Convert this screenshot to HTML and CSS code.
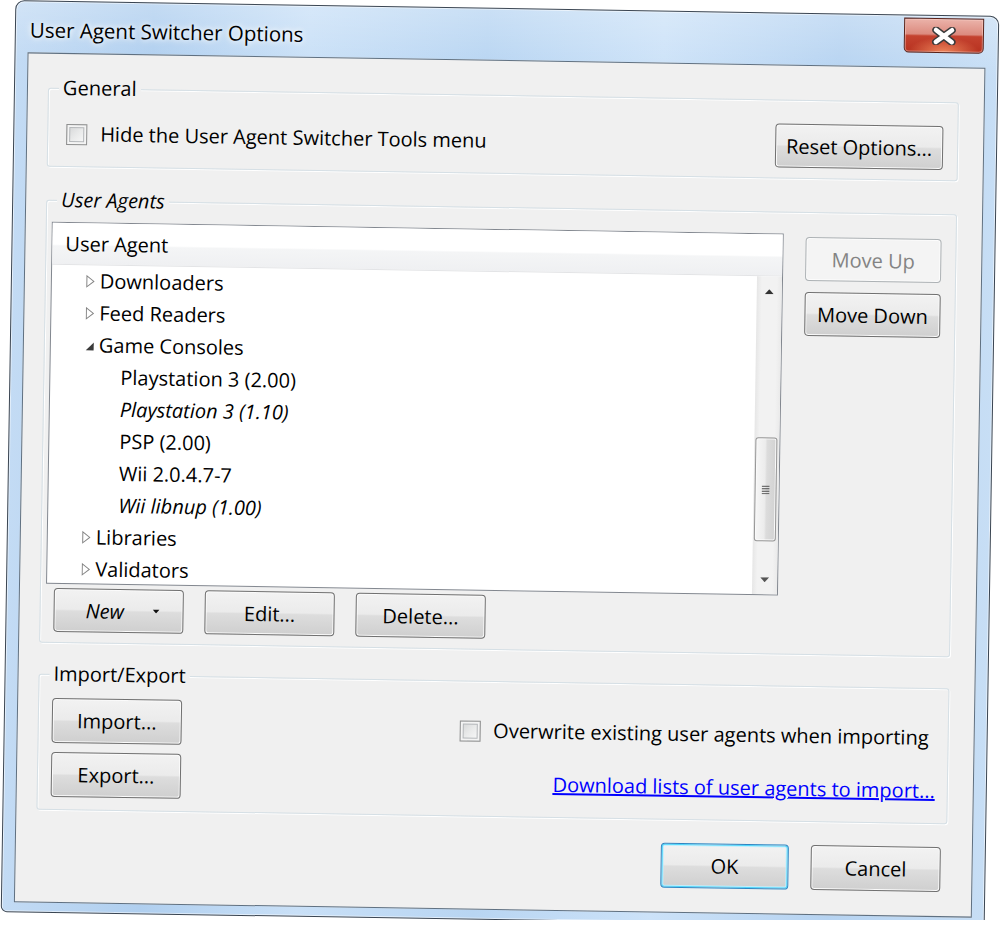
FILE: index.html
```html
<!DOCTYPE html>
<html>
<head>
<meta charset="utf-8">
<title>User Agent Switcher Options</title>
<link rel="stylesheet" href="styles.css">
</head>
<body>
<div class="window">
  <div class="titlebar">
    <span class="title">User Agent Switcher Options</span>
    <div class="close">
      <svg width="28" height="18" viewBox="0 0 28 18">
        <path d="M6 3 L22 15 M22 3 L6 15" stroke="#3b3b3b" stroke-width="7.5" stroke-linecap="round"/>
        <path d="M6 3 L22 15 M22 3 L6 15" stroke="#ffffff" stroke-width="4.5" stroke-linecap="round"/>
      </svg>
    </div>
  </div>
  <div class="client">
    <fieldset class="group general">
      <legend>General</legend>
      <div class="general-body">
        <label class="check"><span class="box"></span><span>Hide the User Agent Switcher Tools menu</span></label>
        <button class="btn reset">Reset Options...</button>
      </div>
    </fieldset>

    <fieldset class="group agents">
      <legend class="italic">User Agents</legend>
      <div class="agents-body">
        <div class="agents-main">
          <div class="tree">
            <div class="tree-head">User Agent</div>
            <div class="tree-body">
              <div class="rows">
                <div class="row l0"><svg class="twisty" viewBox="0 0 9 14"><polygon points="1,1.5 8,7 1,12.5" fill="#fff" stroke="#858585" stroke-width="1"/></svg>Downloaders</div>
                <div class="row l0"><svg class="twisty" viewBox="0 0 9 14"><polygon points="1,1.5 8,7 1,12.5" fill="#fff" stroke="#858585" stroke-width="1"/></svg>Feed Readers</div>
                <div class="row l0"><svg class="twisty" viewBox="0 0 9 14"><polygon points="9,4 9,12 1,12" fill="#3a3a3a"/></svg>Game Consoles</div>
                <div class="row l1">Playstation 3 (2.00)</div>
                <div class="row l1 italic">Playstation 3 (1.10)</div>
                <div class="row l1">PSP (2.00)</div>
                <div class="row l1">Wii 2.0.4.7-7</div>
                <div class="row l1 italic">Wii libnup (1.00)</div>
                <div class="row l0"><svg class="twisty" viewBox="0 0 9 14"><polygon points="1,1.5 8,7 1,12.5" fill="#fff" stroke="#858585" stroke-width="1"/></svg>Libraries</div>
                <div class="row l0"><svg class="twisty" viewBox="0 0 9 14"><polygon points="1,1.5 8,7 1,12.5" fill="#fff" stroke="#858585" stroke-width="1"/></svg>Validators</div>
              </div>
              <div class="scrollbar">
                <div class="sb-btn"><svg width="9" height="5" viewBox="0 0 9 5"><polygon points="4.5,0 9,5 0,5" fill="#333"/></svg></div>
                <div class="sb-track">
                  <div class="thumb">
                    <svg width="8" height="9" viewBox="0 0 8 9"><path d="M0 1h8M0 3.5h8M0 6h8M0 8.5h8" stroke="#4a4a4a" stroke-width="1"/></svg>
                  </div>
                </div>
                <div class="sb-btn"><svg width="9" height="5" viewBox="0 0 9 5"><polygon points="0,0 9,0 4.5,5" fill="#555"/></svg></div>
              </div>
            </div>
          </div>
          <div class="tree-buttons">
            <button class="btn new"><span class="italic">New</span><svg width="7" height="4" viewBox="0 0 7 4"><polygon points="0,0 7,0 3.5,4" fill="#111"/></svg></button>
            <button class="btn">Edit...</button>
            <button class="btn">Delete...</button>
          </div>
        </div>
        <div class="side-buttons">
          <button class="btn disabled">Move Up</button>
          <button class="btn">Move Down</button>
        </div>
      </div>
    </fieldset>

    <fieldset class="group io">
      <legend>Import/Export</legend>
      <div class="io-body">
        <div class="io-buttons">
          <button class="btn io-btn">Import...</button>
          <button class="btn io-btn">Export...</button>
        </div>
        <div class="io-right">
          <label class="check overwrite"><span class="box"></span><span>Overwrite existing user agents when importing</span></label>
          <a class="link" href="#">Download lists of user agents to import...</a>
        </div>
      </div>
    </fieldset>

    <div class="footer">
      <button class="btn ok">OK</button>
      <button class="btn cancel">Cancel</button>
    </div>
  </div>
</div>
</body>
</html>
```

FILE: styles.css
```css
* { box-sizing: border-box; }
html, body { margin: 0; background: #ffffff; }
body {
  font-family: "Open Sans", "Noto Sans", sans-serif;
  font-size: 20px;
  color: #000;
}
.italic { font-style: italic; }

.window {
  width: 984px;
  height: 912px;
  margin: 8px 0 0 8px;
  border: 1px solid #3a4552;
  border-radius: 9px 9px 6px 6px;
  background:
    linear-gradient(180deg, rgba(255,255,255,0.25), rgba(255,255,255,0) 60px),
    linear-gradient(90deg, #c3dbf4 0%, #b0cfef 14%, #c9e0f7 30%, #b8d5f2 48%, #cce2f8 66%, #b6d3f1 84%, #c7def5 100%);
  box-shadow: inset 0 0 0 1px rgba(255,255,255,0.55);
  padding: 0 12px 9px;
  display: flex;
  flex-direction: column;
  transform: rotate(0.92deg);
}

.titlebar {
  height: 51px;
  flex: none;
  display: flex;
  justify-content: space-between;
  align-items: flex-start;
  padding: 0 2px;
}
.title {
  margin-top: 14px;
  line-height: 28px;
  font-size: 20.5px;
  text-shadow: 0 0 5px #fff, 0 0 9px rgba(255,255,255,0.9);
}
.close {
  width: 80px;
  height: 35px;
  margin-top: 2px;
  border: 1px solid #5a2219;
  border-radius: 0 0 5px 5px;
  background:
    radial-gradient(ellipse 45% 45% at 50% 100%, rgba(255,160,110,0.75), rgba(255,160,110,0)),
    linear-gradient(180deg, #ebb3aa 0%, #dc8b7f 46%, #c4422f 52%, #b73220 100%);
  box-shadow: inset 0 0 0 1px rgba(255,220,210,0.45);
  display: flex;
  align-items: center;
  justify-content: center;
}

.client {
  flex: 1;
  border: 1px solid #5f7081;
  background: #f0f0f0;
  padding: 20px 25px 0 20px;
  display: flex;
  flex-direction: column;
}

.group {
  margin: 0;
  padding: 0;
  min-width: 0;
  border: 1px solid #d5dfe5;
  border-radius: 3px;
  box-shadow: inset 1px 1px 0 #fff, 1px 1px 0 #fff;
}
.group legend {
  margin-left: 10px;
  padding: 0 4px;
  line-height: 28px;
  font-size: 20px;
  background: #f0f0f0;
}

.general-body {
  display: flex;
  align-items: center;
  justify-content: space-between;
  padding: 10px 14px 10px 18px;
}
.check {
  display: flex;
  align-items: center;
  line-height: 28px;
}
.box {
  width: 21px;
  height: 21px;
  margin-right: 13px;
  border: 1px solid #8e8f8f;
  background: linear-gradient(135deg, #d2d3d4 0%, #e9eaea 50%, #fbfbfb 100%);
  box-shadow: inset 0 0 0 2px #f4f4f4, inset 0 0 0 3px #b4b7ba;
}

.btn {
  font-family: "Open Sans", "Noto Sans", sans-serif;
  font-size: 20px;
  color: #000;
  height: 44px;
  padding: 0;
  border: 1px solid #707070;
  border-radius: 4px;
  background: linear-gradient(180deg, #f2f2f2 0%, #ebebeb 48%, #dddddd 52%, #cfcfcf 100%);
  box-shadow: inset 0 0 0 1px #fbfbfb;
  display: flex;
  align-items: center;
  justify-content: center;
}
.reset { width: 168px; }

.agents { margin-top: 19px; }
.agents-body {
  display: flex;
  align-items: flex-start;
  padding: 8px 14px 10px 5px;
}
.agents-main { width: 732px; }
.tree {
  width: 732px;
  height: 362px;
  border: 1px solid #82878f;
  background: #fff;
  display: flex;
  flex-direction: column;
}
.tree-head {
  height: 42px;
  flex: none;
  padding-left: 13px;
  line-height: 41px;
  border-bottom: 1px solid #e3e4e6;
  background: linear-gradient(180deg, #ffffff 0%, #ffffff 52%, #f4f5f6 56%, #eff0f2 100%);
}
.tree-body {
  flex: 1;
  display: flex;
  overflow: hidden;
}
.rows { flex: 1; }
.row {
  height: 32px;
  line-height: 32px;
  display: flex;
  align-items: center;
  white-space: nowrap;
}
.row.l0 { padding-left: 34px; }
.row.l1 { padding-left: 70px; }
.twisty {
  width: 9px;
  height: 14px;
  margin-right: 5px;
  flex: none;
}

.scrollbar {
  width: 25px;
  flex: none;
  display: flex;
  flex-direction: column;
  background: linear-gradient(90deg, #e6e6e6 0%, #f2f2f2 20%, #f2f2f2 80%, #eaeaea 100%);
}
.sb-btn {
  height: 30px;
  flex: none;
  display: flex;
  align-items: center;
  justify-content: center;
}
.sb-track { flex: 1; }
.thumb {
  margin: 131px 0 0 1px;
  width: 22px;
  height: 104px;
  border: 1px solid #979797;
  border-radius: 3px;
  background: linear-gradient(90deg, #f6f6f6 0%, #ececec 45%, #dcdcdc 55%, #d2d2d2 100%);
  box-shadow: inset 0 0 0 1px #fafafa;
  display: flex;
  align-items: center;
  justify-content: center;
}

.tree-buttons {
  display: flex;
  gap: 21px;
  margin: 4px 0 0 8px;
}
.tree-buttons .btn { width: 130px; }
.btn.new {
  justify-content: space-between;
  padding: 0 23px 0 31px;
}

.side-buttons {
  width: 136px;
  margin: 3px 0 0 22px;
  display: flex;
  flex-direction: column;
  gap: 11px;
}
.side-buttons .btn { width: 136px; }
.btn.disabled {
  color: #838383;
  border-color: #adb2b5;
  background: #f4f4f4;
  box-shadow: inset 0 0 0 1px #fcfcfc;
}

.io { margin-top: 17px; }
.io-body {
  display: flex;
  padding: 10px 12px 12px 13px;
}
.io-buttons {
  display: flex;
  flex-direction: column;
  gap: 9px;
}
.io-btn { width: 130px; height: 45px; }
.io-right {
  flex: 1;
  display: flex;
  flex-direction: column;
  align-items: flex-end;
  padding-top: 12px;
}
.overwrite { margin-right: 7px; }
.link {
  margin-top: 25px;
  line-height: 28px;
  color: #0000ff;
  text-decoration: underline;
}

.footer {
  display: flex;
  justify-content: flex-end;
  gap: 22px;
  margin: 23px 6px 0 0;
}
.footer .btn { height: 45px; }
.ok {
  width: 128px;
  border-color: #2f86c2;
  box-shadow: inset 0 0 0 1px #4fd6fb, inset 0 0 0 2px #c3eefc;
}
.cancel { width: 130px; }
```
